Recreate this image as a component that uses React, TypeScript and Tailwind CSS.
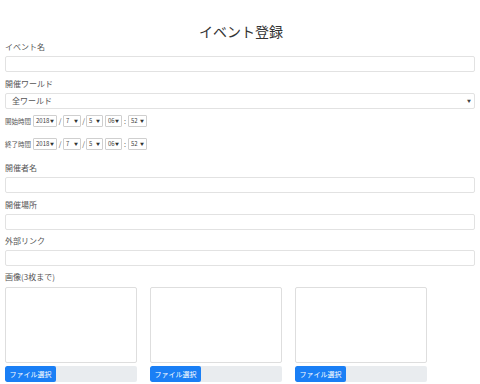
import React from 'react';

const font = { fontFamily: '"Noto Sans CJK JP", "Noto Sans", sans-serif' };

function Label({ children, mb = 'mb-[4px]' }: { children: React.ReactNode; mb?: string }) {
  return <div className="text-[8px] leading-[10px] text-[#555]">
    <div className={mb}>{children}</div>
  </div>;
}

function TextInput() {
  return <div className="h-[16px] rounded-[2px] border border-[#e2e2e2] bg-white" />;
}

function MiniSelect({ value, w }: { value: string; w: string }) {
  return (
    <div
      className={`${w} h-[12px] flex items-center justify-between border border-[#cfcfcf] rounded-[1px] bg-white pl-[2px] pr-[2px] text-[6px] leading-none text-[#444]`}
    >
      <span>{value}</span>
      <span className="text-[4px] text-[#333]">▼</span>
    </div>
  );
}

function DateRow({ label }: { label: string }) {
  return (
    <div className="flex items-center h-[12px] text-[7px] text-[#555]">
      <span className="w-[28px] text-[6.5px] leading-none whitespace-nowrap">{label}</span>
      <MiniSelect value="2018" w="w-[24px]" />
      <span className="w-[6px] text-center">/</span>
      <MiniSelect value="7" w="w-[18px]" />
      <span className="w-[5px] text-center">/</span>
      <MiniSelect value="5" w="w-[17px]" />
      <span className="w-[2px]" />
      <MiniSelect value="06" w="w-[17px]" />
      <span className="w-[6px] text-center">:</span>
      <MiniSelect value="52" w="w-[19px]" />
    </div>
  );
}

function ImageSlot() {
  return (
    <div className="w-[132px] flex flex-col">
      <div className="h-[76px] border border-[#dedede] rounded-[2px] bg-white" />
      <div className="mt-[3px] h-[16px] flex rounded-[2px] bg-[#e9ecef] overflow-hidden">
        <div className="w-[51px] bg-[#1a7ff5] text-white text-[7px] flex items-center justify-center rounded-[2px]">
          ファイル選択
        </div>
      </div>
    </div>
  );
}

export default function App() {
  return (
    <div className="w-[480px] h-[384px] bg-white overflow-hidden px-[5px]" style={font}>
      <h1 className="pt-[21px] text-center text-[14px] leading-[20px] text-[#333] mb-[1px] pl-[2px]">
        イベント登録
      </h1>

      <Label>イベント名</Label>
      <TextInput />

      <div className="mt-[7px]">
        <Label>開催ワールド</Label>
        <div className="h-[16px] rounded-[2px] border border-[#e2e2e2] bg-white flex items-center justify-between pl-[6px] pr-[3px] text-[8px] text-[#555]">
          <span>全ワールド</span>
          <span className="text-[4px] text-[#444]">▼</span>
        </div>
      </div>

      <div className="mt-[6px]">
        <DateRow label="開始時間" />
      </div>
      <div className="mt-[11px]">
        <DateRow label="終了時間" />
      </div>

      <div className="mt-[13px]">
        <Label>開催者名</Label>
        <TextInput />
      </div>
      <div className="mt-[7px]">
        <Label>開催場所</Label>
        <TextInput />
      </div>
      <div className="mt-[6px]">
        <Label>外部リンク</Label>
        <TextInput />
      </div>

      <div className="mt-[6px]">
        <Label mb="mb-[5px]">画像(3枚まで)</Label>
        <div className="flex gap-[13px]">
          <ImageSlot />
          <ImageSlot />
          <ImageSlot />
        </div>
      </div>
    </div>
  );
}
